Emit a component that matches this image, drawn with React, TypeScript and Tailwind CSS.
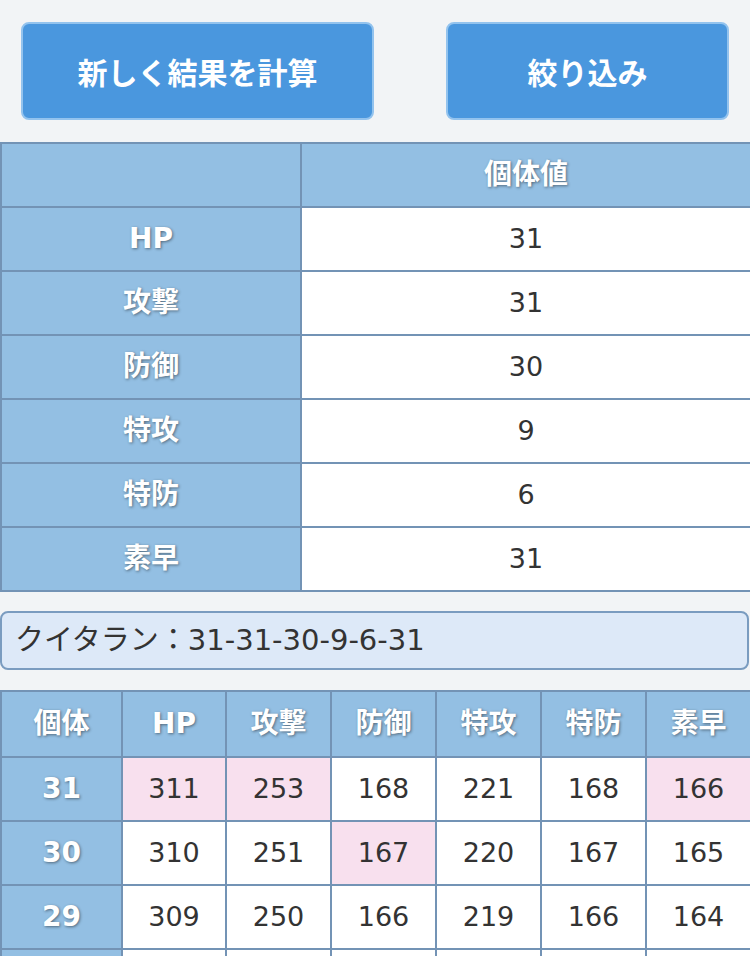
const stats = [
  { label: "HP", value: 31 },
  { label: "攻撃", value: 31 },
  { label: "防御", value: 30 },
  { label: "特攻", value: 9 },
  { label: "特防", value: 6 },
  { label: "素早", value: 31 },
];

const heads = ["個体", "HP", "攻撃", "防御", "特攻", "特防", "素早"];

const rows = [
  { iv: 31, vals: [311, 253, 168, 221, 168, 166], hit: [true, true, false, false, false, true] },
  { iv: 30, vals: [310, 251, 167, 220, 167, 165], hit: [false, false, true, false, false, false] },
  { iv: 29, vals: [309, 250, 166, 219, 166, 164], hit: [false, false, false, false, false, false] },
  { iv: 28, vals: [308, 249, 165, 218, 165, 163], hit: [false, false, false, false, false, false] },
  { iv: 27, vals: [307, 248, 164, 217, 164, 162], hit: [false, false, false, false, false, false] },
];

const font = "font-['DejaVu_Sans','Noto_Sans_CJK_JP',sans-serif]";
const headCell =
  "border-2 border-[#7393b5] bg-[#93bfe3] text-white font-bold text-[28px] text-center [text-shadow:1px_1px_3px_rgba(0,0,0,0.45)]";
const valCell = "border-2 border-[#7393b5] text-[#333] text-[27px] text-center";
const btn =
  "h-[98px] rounded-lg border-2 border-[#93c3ee] bg-[#4a97de] text-white text-[30px] font-bold font-['Noto_Sans_CJK_JP',sans-serif]";

export default function App() {
  return (
    <div className={`min-h-screen bg-[#f2f4f6] pb-10 ${font}`}>
      {/* buttons */}
      <div className="flex justify-between px-[21px] pt-[22px]">
        <button className={`w-[353px] ${btn}`}>新しく結果を計算</button>
        <button className={`w-[283px] ${btn}`}>絞り込み</button>
      </div>

      {/* IV table */}
      <table className="mt-[22px] w-[750px] table-fixed border-collapse">
        <colgroup>
          <col className="w-[300px]" />
          <col className="w-[450px]" />
        </colgroup>
        <tbody>
          <tr className="h-[64px]">
            <td className={headCell}></td>
            <td className={headCell}>個体値</td>
          </tr>
          {stats.map((s) => (
            <tr key={s.label} className="h-[64px]">
              <td className={headCell}>{s.label}</td>
              <td className={`${valCell} bg-white`}>{s.value}</td>
            </tr>
          ))}
        </tbody>
      </table>

      {/* summary */}
      <div className="mt-[19px] w-[749px] h-[59px] flex items-center pl-[13px] rounded-lg border-2 border-[#7a9cc0] bg-[#dde9f8] text-[#333] text-[29px]">
        クイタラン：31-31-30-9-6-31
      </div>

      {/* stat table */}
      <table className="mt-[20px] w-[750px] table-fixed border-collapse">
        <colgroup>
          <col className="w-[121px]" />
          <col className="w-[104px]" />
          <col className="w-[105px]" />
          <col className="w-[105px]" />
          <col className="w-[105px]" />
          <col className="w-[105px]" />
          <col className="w-[105px]" />
        </colgroup>
        <tbody>
          <tr className="h-[66px]">
            {heads.map((h) => (
              <td key={h} className={headCell}>
                {h}
              </td>
            ))}
          </tr>
          {rows.map((r) => (
            <tr key={r.iv} className="h-[64px]">
              <td className={headCell}>{r.iv}</td>
              {r.vals.map((v, i) => (
                <td key={i} className={`${valCell} ${r.hit[i] ? "bg-[#f8e0ee]" : "bg-white"}`}>
                  {v}
                </td>
              ))}
            </tr>
          ))}
        </tbody>
      </table>
    </div>
  );
}
